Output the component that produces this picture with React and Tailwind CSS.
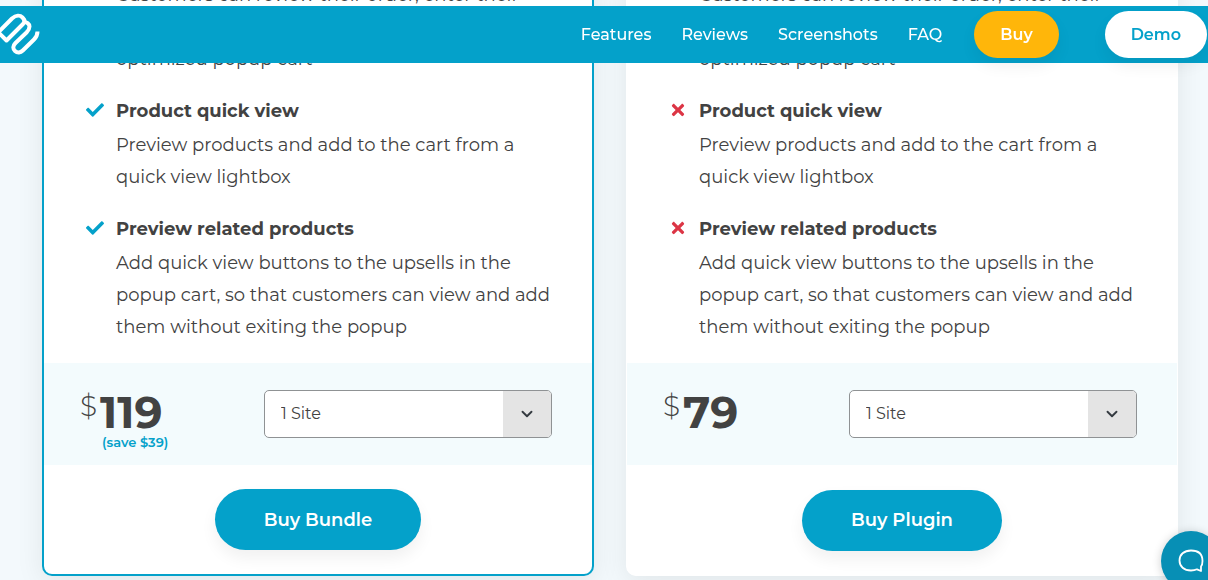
import { FaCheck, FaTimes } from 'react-icons/fa';
import { ChevronDown } from 'lucide-react';

const navLinks = [
  { id: 'features', name: 'Features' },
  { id: 'reviews', name: 'Reviews' },
  { id: 'screenshots', name: 'Screenshots' },
  { id: 'faq', name: 'FAQ' },
];

const features = [
  {
    title: 'Product quick view',
    text: 'Preview products and add to the cart from a quick view lightbox',
  },
  {
    title: 'Preview related products',
    text: 'Add quick view buttons to the upsells in the popup cart, so that customers can view and add them without exiting the popup',
  },
];

const plans = [
  { id: 'bundle', price: '119', save: '(save $39)', included: true, cta: 'Buy Bundle' },
  { id: 'plugin', price: '79', included: false, cta: 'Buy Plugin' },
];

function Logo() {
  return (
    <svg
      viewBox="0 6 40 57"
      className="h-[57px] w-10"
      fill="none"
      stroke="white"
      strokeWidth="4"
      strokeLinejoin="round"
    >
      <path d="M-1 31.500 L12 18.500 C16 15 20 15 22.500 17.500 C25 20 25 22 23 24 L6.500 40.500 L-2 32" />
      <path d="M23.500 22 C26.500 21.500 29.500 24 29.500 26.500 C29.500 29 28.500 30.500 26.500 32.500 L15.500 43 C12.500 46 12.800 49 15 51 C17.500 53.300 20.500 52.800 22.800 50.500 L34 39.500 C36.500 37 37.500 34.500 37.500 31.500" />
    </svg>
  );
}

function Header() {
  return (
    <header className="fixed inset-x-0 top-[6px] z-10 flex h-[57px] items-center justify-between bg-[#04a1ca] pr-px text-base text-white">
      <a href="#top" aria-label="Home">
        <Logo />
      </a>
      <nav className="flex items-center">
        <div className="mr-8 flex gap-[30px] font-medium">
          {navLinks.map((link) => (
            <a key={link.id} href={`#${link.id}`}>
              {link.name}
            </a>
          ))}
        </div>
        <a
          href="#buy"
          className="mr-[46px] flex h-[47px] items-center rounded-full bg-[#ffb60a] px-[26px] font-semibold shadow-[0_8px_16px_rgba(0,0,0,0.06)]"
        >
          Buy
        </a>
        <a
          href="#demo"
          className="flex h-[47px] items-center rounded-full bg-white px-[26px] font-semibold text-[#04a1ca] shadow-[0_8px_16px_rgba(0,0,0,0.06)]"
        >
          Demo
        </a>
      </nav>
    </header>
  );
}

function Feature({ title, text, included }) {
  return (
    <li className="flex gap-3">
      <span className="flex h-[30px] w-[18px] shrink-0 items-center justify-center">
        {included ? (
          <FaCheck className="size-[18px] text-[#04a1ca]" />
        ) : (
          <FaTimes className="size-[18px] text-[#dc3545]" />
        )}
      </span>
      <div>
        <h3 className="mb-[2px] font-bold">{title}</h3>
        <p>{text}</p>
      </div>
    </li>
  );
}

function PlanCard({ plan }) {
  const border = plan.included ? 'border-2 border-[#04a1ca]' : 'border border-white';

  return (
    <section
      className={`flex flex-col rounded-b-[10px] border-t-0 bg-white shadow-[0_6px_28px_rgba(0,0,0,0.08)] ${border}`}
    >
      <div className="pl-[72px] pr-[30px] text-lg leading-8">
        <p>Customers can review their order, enter their</p>
        <p className="mt-8">optimized popup cart</p>
      </div>
      <ul className="mt-5 space-y-5 pl-[42px] pr-[30px] text-lg leading-8">
        {features.map((feature) => (
          <Feature key={feature.title} {...feature} included={plan.included} />
        ))}
      </ul>

      <div className="mt-5 flex min-h-[102px] items-start justify-between bg-[#f3fbfd] pl-9 pr-10 pt-[27px]">
        <div>
          <div className="flex items-start gap-[3px]">
            <span className="text-[28px] font-light leading-8">$</span>
            <span className="text-[44px] font-bold leading-[44px]">{plan.price}</span>
          </div>
          {plan.save && (
            <p className="pl-[22px] text-[13px] font-semibold leading-4 text-[#04a1ca]">{plan.save}</p>
          )}
        </div>
        <div className="relative h-12 w-72">
          <select
            aria-label="Licence"
            className="h-full w-full appearance-none rounded-[5px] border border-[#8f9294] bg-white pl-4 text-base"
          >
            <option>1 Site</option>
          </select>
          <span className="pointer-events-none absolute inset-y-px right-px flex w-12 items-center justify-center rounded-r bg-[#e4e4e4]">
            <ChevronDown className="size-[18px] text-[#343a40]" strokeWidth={2.5} />
          </span>
        </div>
      </div>

      <div className="flex flex-1 items-center justify-center py-6">
        <button
          type="button"
          className="h-[61px] rounded-full bg-[#04a1ca] px-[49px] text-lg font-semibold text-white shadow-[0_8px_16px_rgba(0,0,0,0.06)]"
        >
          {plan.cta}
        </button>
      </div>
    </section>
  );
}

function ChatButton() {
  return (
    <button
      type="button"
      aria-label="Open chat"
      className="fixed -bottom-[11px] -right-[13px] z-10 flex size-[60px] items-center justify-center rounded-full bg-[#078fb5] shadow-[0_1px_10px_rgba(0,0,0,0.2)]"
    >
      <svg viewBox="0 0 26 24" className="h-6 w-[26px]" fill="none" stroke="white" strokeWidth="1.8">
        <path
          d="M23 22 V17.500 C24.300 16 24.500 13.500 24.500 12 C24.500 5 20 1.500 13 1.500 C6 1.500 1.500 5.500 1.500 11.500 C1.500 17.500 6 21.500 13 21.500 C15.500 21.500 17.500 21 19 20.300 L23 22 Z"
          strokeLinejoin="round"
        />
      </svg>
    </button>
  );
}

export default function App() {
  return (
    <div className="min-h-screen overflow-hidden bg-[#f3f9fc] font-['Montserrat','Inter',sans-serif] text-[#424242]">
      <Header />
      <main className="-mt-[21px] grid grid-cols-2 gap-8 pb-1 pl-[42px] pr-[30px]">
        {plans.map((plan) => (
          <PlanCard key={plan.id} plan={plan} />
        ))}
      </main>
      <ChatButton />
    </div>
  );
}
